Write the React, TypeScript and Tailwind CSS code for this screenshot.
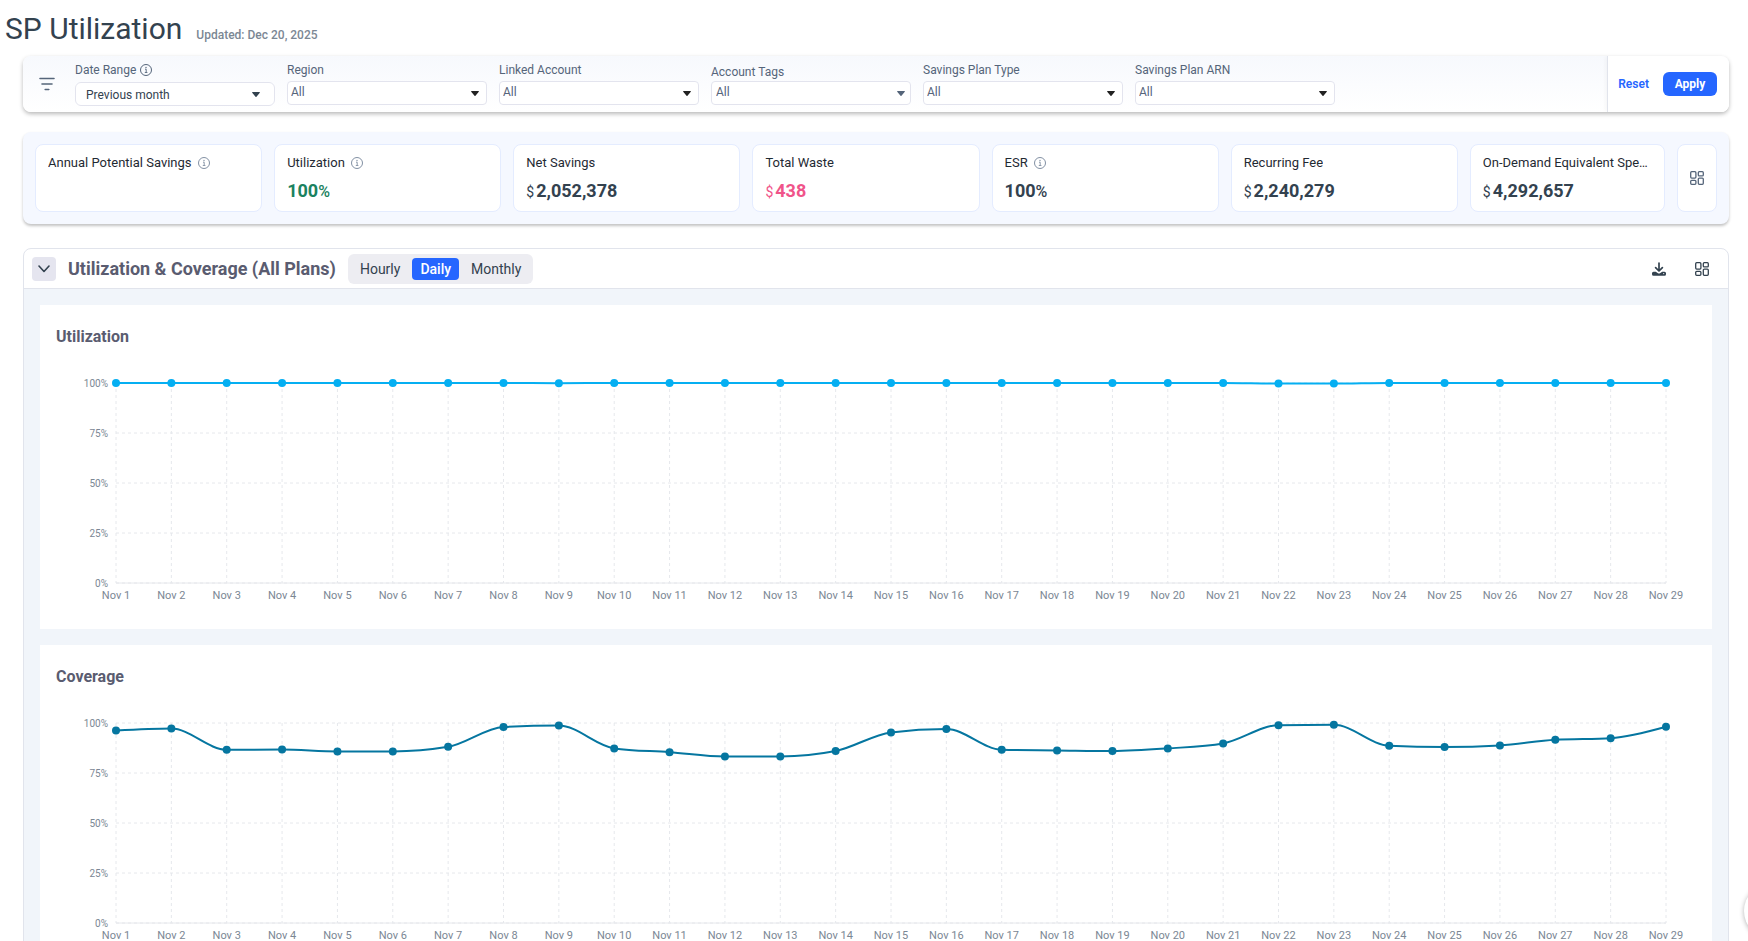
import { useLayoutEffect, useRef, useState } from "react";
import type { ReactNode } from "react";

interface IFilter {
  id: string;
  label: string;
  value: string;
  info?: boolean;
  columnClass?: string;
  labelClass: string;
  selectClass: string;
  caretClass: string;
}

interface IMetric {
  label: string;
  value?: string;
  prefix?: string;
  suffix?: string;
  info?: boolean;
  valueClass?: string;
}

const PLAIN_FILTER = {
  columnClass: "pb-0.5",
  labelClass: "pb-0.5",
  selectClass: "pl-[3px] pb-0.5 rounded text-[#55657a]",
  caretClass: "right-2 text-[#222]",
};

const FILTERS: IFilter[] = [
  {
    id: "date-range",
    label: "Date Range",
    value: "Previous month",
    info: true,
    labelClass: "pb-1",
    selectClass: "pl-2.5 pt-0.5 rounded-md text-[#33424f]",
    caretClass: "right-[15px] text-[#33424f]",
  },
  { id: "region", label: "Region", value: "All", ...PLAIN_FILTER },
  { id: "linked-account", label: "Linked Account", value: "All", ...PLAIN_FILTER },
  {
    id: "account-tags",
    label: "Account Tags",
    value: "All",
    columnClass: "pb-0.5",
    labelClass: "pt-0.5",
    selectClass: "pl-1 pb-0.5 rounded text-[#55657a]",
    caretClass: "right-1.5 text-[#55657a]",
  },
  { id: "plan-type", label: "Savings Plan Type", value: "All", ...PLAIN_FILTER },
  { id: "plan-arn", label: "Savings Plan ARN", value: "All", ...PLAIN_FILTER },
];

const METRICS: IMetric[] = [
  { label: "Annual Potential Savings", info: true },
  { label: "Utilization", value: "100", suffix: "%", info: true, valueClass: "text-[#1b8260]" },
  { label: "Net Savings", value: "2,052,378", prefix: "$" },
  { label: "Total Waste", value: "438", prefix: "$", valueClass: "text-[#f0548a]" },
  { label: "ESR", value: "100", suffix: "%", info: true },
  { label: "Recurring Fee", value: "2,240,279", prefix: "$" },
  { label: "On-Demand Equivalent Spend", value: "4,292,657", prefix: "$" },
];

const PERIODS = ["Hourly", "Daily", "Monthly"];

const UTILIZATION = [
  100, 100, 100, 100, 100, 100, 100, 100, 99.9, 100, 100, 100, 100, 100, 100,
  100, 100, 100, 100, 100, 100, 99.7, 99.7, 100, 100, 100, 100, 100, 100,
];

const COVERAGE = [
  96.2, 97.2, 86.6, 86.7, 85.8, 85.8, 88.1, 98, 98.7, 87.3, 85.4, 83.2, 83.3,
  86, 95.3, 97, 86.6, 86.3, 86, 87.3, 89.8, 98.9, 99.1, 88.6, 88, 88.8, 91.6,
  92.4, 98.1,
];

const Y_TICKS = [0, 25, 50, 75, 100];

function InfoIcon({ className }: { className?: string }) {
  return (
    <svg viewBox="0 0 12 12" className={`w-3 h-3 shrink-0 ${className ?? ""}`} fill="none" stroke="currentColor">
      <circle cx="6" cy="6" r="5.5" />
      <path d="M5 5.2h1.2v3.1M4.8 8.5h2.6" strokeWidth="0.9" />
      <circle cx="6" cy="3.5" r="0.7" fill="currentColor" stroke="none" />
    </svg>
  );
}

function TilesIcon() {
  return (
    <svg viewBox="0 0 14 14" className="w-3.5 h-3.5" fill="none" stroke="currentColor" strokeWidth="1.3">
      <rect x="0.7" y="0.7" width="5.2" height="6.4" rx="1" />
      <rect x="8.3" y="0.7" width="5" height="4.2" rx="1" />
      <rect x="0.7" y="9.3" width="5.2" height="4" rx="1" />
      <rect x="8.3" y="7.1" width="5" height="6.2" rx="1" />
    </svg>
  );
}

function FilterSelect({ filter }: { filter: IFilter }) {
  return (
    <div className={`w-[200px] flex flex-col justify-center ${filter.columnClass ?? ""}`}>
      <label
        htmlFor={filter.id}
        className={`flex items-center gap-1 h-5 text-xs text-[#55657a] ${filter.labelClass}`}
      >
        {filter.label}
        {filter.info && <InfoIcon />}
      </label>
      <div className="relative">
        <select
          id={filter.id}
          className={`block w-full h-6 appearance-none border border-[#e3e4ee] bg-white text-xs ${filter.selectClass}`}
        >
          <option>{filter.value}</option>
        </select>
        <svg
          viewBox="0 0 8 5"
          className={`absolute top-2.5 w-2 h-[5px] pointer-events-none ${filter.caretClass}`}
          fill="currentColor"
        >
          <path d="M0.6 0h6.8a.5.5 0 0 1 .4.8L4.7 4.6a.9.9 0 0 1-1.4 0L.2.8A.5.5 0 0 1 .6 0z" />
        </svg>
      </div>
    </div>
  );
}

function FilterBar() {
  return (
    <section className="ml-[23px] mr-[19px] flex h-14 overflow-hidden rounded-lg bg-linear-to-b from-[#f7f9fd] to-white shadow-[0_2px_4px_rgba(0,0,0,0.28)]">
      <div className="flex flex-1 items-center">
        <svg viewBox="0 0 16 14" className="w-4 h-3.5 ml-4 mr-5 shrink-0 text-[#55657a]" stroke="currentColor" strokeWidth="1.6" strokeLinecap="round">
          <path d="M1 1.5h14M3 7h10M6.2 12.5h3.6" />
        </svg>
        <div className="flex gap-3">
          {FILTERS.map((filter) => (
            <FilterSelect key={filter.id} filter={filter} />
          ))}
        </div>
      </div>
      <div className="flex items-center gap-3.5 border-l border-[#e1e4ec] bg-white pl-2.5 pr-3 shadow-[-2px_0_4px_rgba(0,0,0,0.03)]">
        <button type="button" className="text-xs font-semibold text-[#2566ff]">
          Reset
        </button>
        <button type="button" className="h-6 w-[54px] rounded-md bg-[#2566ff] text-xs font-bold text-white">
          Apply
        </button>
      </div>
    </section>
  );
}

function MetricCard({ metric }: { metric: IMetric }) {
  return (
    <div className="min-w-0 rounded-lg border border-[#e4ecff] bg-white px-3 pt-2">
      <div className="flex items-center gap-1.5 text-[13px] leading-5 text-[#1f2a33]">
        <span className="truncate">{metric.label}</span>
        {metric.info && <InfoIcon className="text-[#8290a3]" />}
      </div>
      {metric.value && (
        <p className={`mt-1.5 text-lg leading-6 font-bold ${metric.valueClass ?? "text-[#33424f]"}`}>
          {metric.prefix && <span className="mr-0.5 text-sm font-normal">{metric.prefix}</span>}
          {metric.value}
          {metric.suffix && <span className="text-base font-medium">{metric.suffix}</span>}
        </p>
      )}
    </div>
  );
}

function MetricStrip() {
  return (
    <section className="ml-[23px] mr-[19px] mt-5 grid h-[92px] grid-cols-[repeat(6,minmax(0,227fr))_minmax(0,195fr)_40px] gap-3 rounded-lg bg-[#f5f8ff] p-3 shadow-[0_2px_3px_rgba(0,0,0,0.24)]">
      {METRICS.map((metric) => (
        <MetricCard key={metric.label} metric={metric} />
      ))}
      <button
        type="button"
        aria-label="Customize metrics"
        className="flex items-center justify-center rounded-lg border border-[#e4ecff] bg-white text-[#55657a]"
      >
        <TilesIcon />
      </button>
    </section>
  );
}

// Fritsch-Carlson style monotone cubic, so the curve never overshoots a point
function monotonePath(points: [number, number][]) {
  const slopes = points.slice(1).map(([x, y], i) => (y - points[i][1]) / (x - points[i][0]));
  const tangents = points.map((_, i) => {
    if (i === 0 || i === points.length - 1) return 0;
    const a = slopes[i - 1];
    const b = slopes[i];
    if (a * b <= 0) return 0;
    return Math.sign(a) * Math.min(Math.abs(a), Math.abs(b), Math.abs(a + b) / 4) * 2;
  });
  const last = points.length - 1;
  tangents[0] = (3 * slopes[0] - tangents[1]) / 2;
  tangents[last] = (3 * slopes[last - 1] - tangents[last - 1]) / 2;

  return points.slice(1).reduce((path, [x, y], i) => {
    const [px, py] = points[i];
    const dx = (x - px) / 3;
    return `${path}C${px + dx},${py + dx * tangents[i]},${x - dx},${y - dx * tangents[i + 1]},${x},${y}`;
  }, `M${points[0][0]},${points[0][1]}`);
}

function LineChart({ data, color, label }: { data: number[]; color: string; label: string }) {
  const ref = useRef<HTMLDivElement>(null);
  const [width, setWidth] = useState(1640);

  useLayoutEffect(() => {
    const el = ref.current;
    if (!el) return;
    setWidth(el.clientWidth);
    const observer = new ResizeObserver(() => setWidth(el.clientWidth));
    observer.observe(el);
    return () => observer.disconnect();
  }, []);

  const left = 60;
  const right = width - 30;
  const top = 8;
  const height = 200;
  const x = (i: number) => left + ((right - left) * i) / (data.length - 1);
  const y = (value: number) => top + height - (value / 100) * height;
  const points = data.map((value, i): [number, number] => [x(i), y(value)]);

  return (
    <div ref={ref} className="w-full overflow-hidden">
      <svg width={width} height={238} role="img" aria-label={label}>
        <g stroke="#e6e8ec" strokeDasharray="3 3">
          {Y_TICKS.map((tick) => (
            <line key={tick} x1={left} x2={right} y1={y(tick)} y2={y(tick)} />
          ))}
          {data.map((_, i) => (
            <line key={i} x1={x(i)} x2={x(i)} y1={top} y2={top + height} />
          ))}
        </g>
        <line x1={left} x2={right} y1={y(0)} y2={y(0)} stroke="#e6e8ec" />
        <g className="text-[10px]" fill="#7b8794" textAnchor="end">
          {Y_TICKS.map((tick) => (
            <text key={tick} x={left - 8} y={y(tick) + 4}>
              {tick}%
            </text>
          ))}
        </g>
        <g className="text-[11px]" fill="#7b8794" textAnchor="middle">
          {data.map((_, i) => (
            <text key={i} x={x(i)} y={top + height + 16}>
              Nov {i + 1}
            </text>
          ))}
        </g>
        <path d={monotonePath(points)} fill="none" stroke={color} strokeWidth="2" />
        {points.map(([cx, cy], i) => (
          <circle key={i} cx={cx} cy={cy} r="4" fill={color} />
        ))}
      </svg>
    </div>
  );
}

function ChartCard({ title, children }: { title: string; children: ReactNode }) {
  return (
    <article className="bg-white px-4 pt-5 pb-4">
      <h3 className="mb-[26px] text-base leading-6 font-bold text-[#5a5c70]">{title}</h3>
      {children}
    </article>
  );
}

export default function App() {
  const [period, setPeriod] = useState("Daily");

  return (
    <main className="h-screen overflow-x-hidden overflow-y-auto bg-white font-[Roboto,sans-serif] [scrollbar-width:none]">
      <header className="flex items-baseline gap-3.5 pt-[9px] pl-[5px] pb-[7px]">
        <h1 className="text-[30px] leading-10 text-[#33424f]">SP Utilization</h1>
        <p className="text-xs font-medium text-[#7b8794]">Updated: Dec 20, 2025</p>
      </header>

      <FilterBar />
      <MetricStrip />

      <section className="ml-[23px] mr-[19px] mt-6 overflow-hidden rounded-lg border border-[#e1e4ec]">
        <div className="flex h-10 items-center border-b border-[#e1e4ec] pl-2 pr-[19px]">
          <button
            type="button"
            aria-label="Collapse section"
            className="flex h-6 w-6 items-center justify-center rounded bg-[#e5e5ef] text-[#33424f]"
          >
            <svg viewBox="0 0 12 8" className="w-3 h-2" fill="none" stroke="currentColor" strokeWidth="1.6" strokeLinecap="round" strokeLinejoin="round">
              <path d="M1 1l5 5.5L11 1" />
            </svg>
          </button>
          <h2 className="ml-3 text-lg font-bold text-[#5a5c70]">Utilization &amp; Coverage (All Plans)</h2>
          <div className="ml-3 flex gap-1 rounded-md bg-[#ededf2] p-1 text-sm">
            {PERIODS.map((item) => (
              <button
                key={item}
                type="button"
                aria-pressed={item === period}
                onClick={() => setPeriod(item)}
                className={`h-[22px] rounded px-2 leading-5 ${
                  item === period ? "bg-[#2566ff] font-medium text-white" : "text-[#33424f]"
                }`}
              >
                {item}
              </button>
            ))}
          </div>
          <div className="ml-auto flex items-center gap-[29px] text-[#33424f]">
            <button type="button" aria-label="Download">
              <svg viewBox="0 0 14 14" className="w-3.5 h-3.5" fill="none" stroke="currentColor" strokeWidth="1.7" strokeLinecap="round" strokeLinejoin="round">
                <path d="M7 1v7.6M3.6 5.6L7 9l3.4-3.4" />
                <path
                  d="M1.5 9.8h2.3L6 11.2a1.8 1.8 0 0 0 2 0l2.2-1.4h2.3A1.5 1.5 0 0 1 14 11.300v1a1.500 1.500 0 0 1-1.500 1.500h-11A1.500 1.500 0 0 1 0 12.300v-1a1.500 1.500 0 0 1 1.500-1.500z"
                  fill="currentColor"
                  stroke="none"
                />
                <circle cx="11.700" cy="11.600" r="0.600" fill="#fff" stroke="none" />
              </svg>
            </button>
            <button type="button" aria-label="Customize charts">
              <TilesIcon />
            </button>
          </div>
        </div>
        <div className="flex flex-col gap-4 bg-[#f1f5fa] p-4">
          <ChartCard title="Utilization">
            <LineChart data={UTILIZATION} color="#05aff2" label="Daily utilization" />
          </ChartCard>
          <ChartCard title="Coverage">
            <LineChart data={COVERAGE} color="#0576a0" label="Daily coverage" />
          </ChartCard>
        </div>
      </section>

      <button
        type="button"
        aria-label="Open help"
        className="fixed -right-[52px] bottom-0.5 h-14 w-14 rounded-full bg-white shadow-[0_1px_5px_rgba(0,0,0,0.3)]"
      />
    </main>
  );
}
